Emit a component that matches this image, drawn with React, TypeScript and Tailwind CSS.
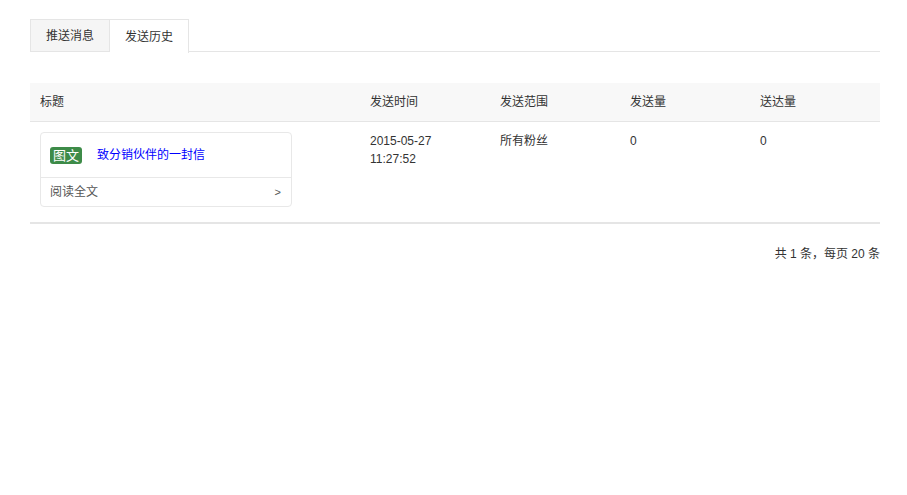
import React from "react";

export default function App() {
  const font = { fontFamily: '"Liberation Sans", "Noto Sans CJK SC", sans-serif' };
  return (
    <div className="min-h-[495px] bg-white text-[12px] text-[#333] leading-[18px]" style={font}>
      <div className="px-[30px] pt-[19px]">
        <div className="flex w-[850px]">
          <div className="h-[33px] px-[15px] flex items-center border border-[#e5e5e5] bg-[#f5f5f5]">推送消息</div>
          <div className="h-[34px] px-[15px] flex items-center border border-l-0 border-b-0 border-[#e5e5e5] bg-white">发送历史</div>
          <div className="flex-1 border-b border-[#e5e5e5] h-[33px]"></div>
        </div>
        <div className="mt-[30px] w-[850px]">
          <div className="flex h-[39px] bg-[#f8f8f8] border-b border-[#e5e5e5] items-center">
            <div className="w-[330px] pl-[10px]">标题</div>
            <div className="w-[130px] pl-[10px]">发送时间</div>
            <div className="w-[130px] pl-[10px]">发送范围</div>
            <div className="w-[130px] pl-[10px]">发送量</div>
            <div className="w-[130px] pl-[10px]">送达量</div>
          </div>
          <div className="flex border-b-2 border-[#e5e5e5] pt-[10px] pb-[15px]">
            <div className="w-[330px] pl-[10px]">
              <div className="w-[252px] border border-[#e8e8e8] rounded-[4px]">
                <div className="h-[45px] flex items-center pl-[9px] border-b border-[#e8e8e8]">
                  <span className="bg-[#3d8b48] text-white rounded-[3px] px-[3px] h-[17px] leading-[17px] text-[13px]">图文</span>
                  <span className="ml-[15px] text-[#0000ff]">致分销伙伴的一封信</span>
                </div>
                <div className="h-[28px] flex items-center justify-between pl-[9px] pr-[10px] text-[#555]">
                  <span>阅读全文</span>
                  <span className="text-[11px]">&gt;</span>
                </div>
              </div>
            </div>
            <div className="w-[130px] pl-[10px]">
              <div>2015-05-27</div>
              <div>11:27:52</div>
            </div>
            <div className="w-[130px] pl-[10px]">所有粉丝</div>
            <div className="w-[130px] pl-[10px]">0</div>
            <div className="w-[130px] pl-[10px]">0</div>
          </div>
          <div className="flex justify-end mt-[21px]">共 1 条，每页 20 条</div>
        </div>
      </div>
    </div>
  );
}
